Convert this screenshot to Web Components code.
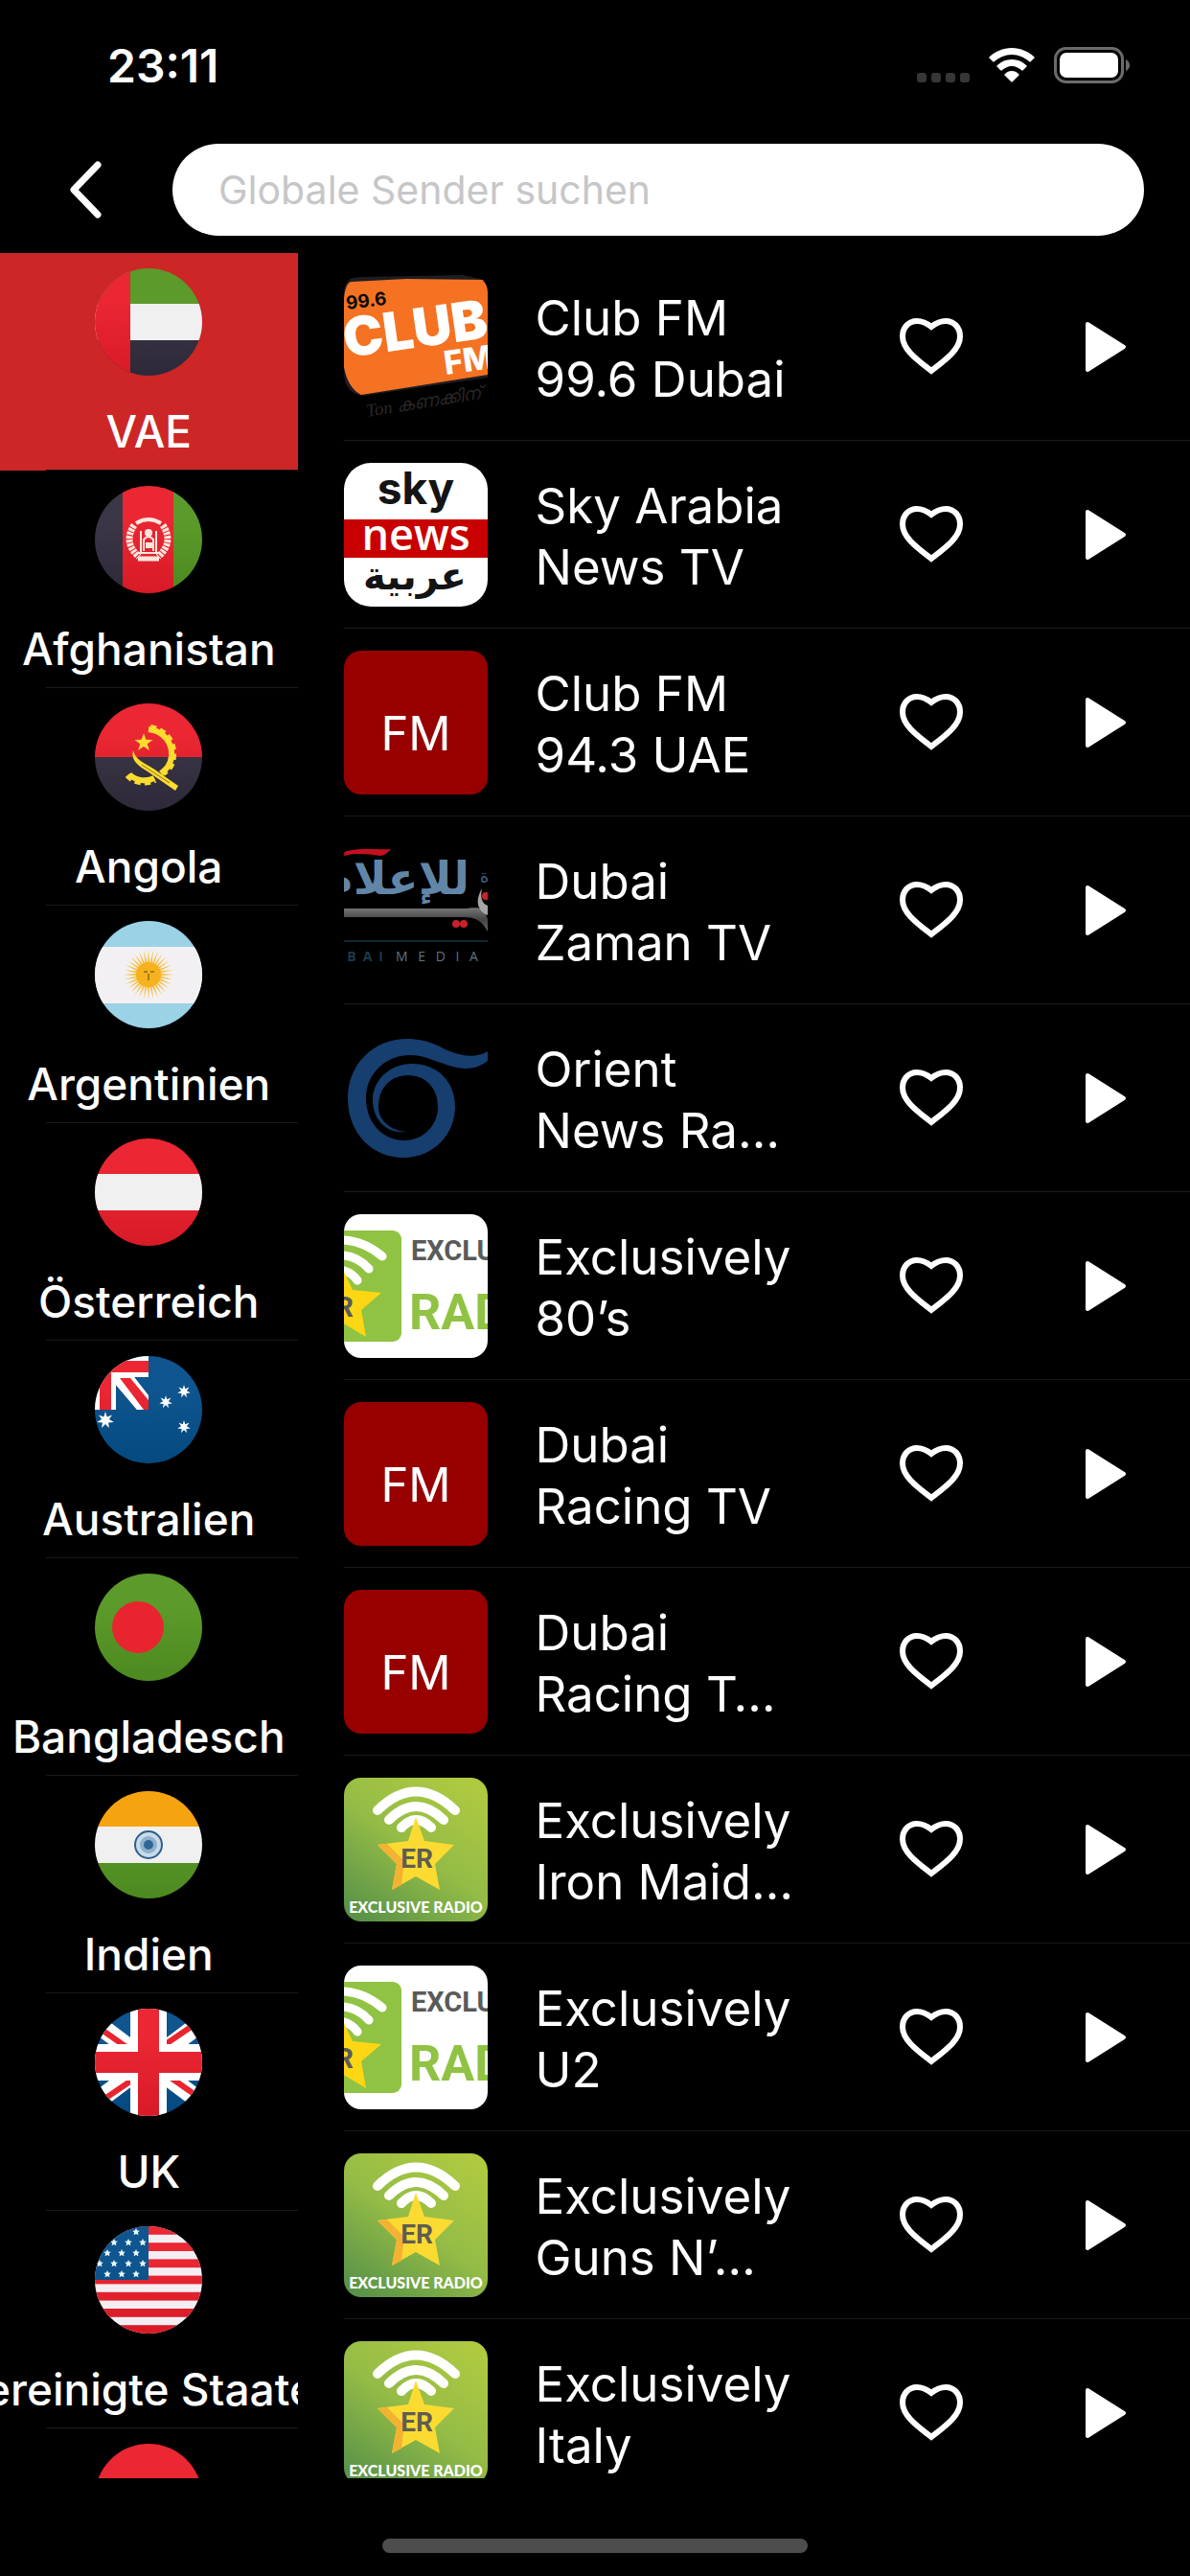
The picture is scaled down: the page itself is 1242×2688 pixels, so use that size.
<!DOCTYPE html>
<html lang="de">
<head>
<meta charset="utf-8">
<meta name="viewport" content="width=device-width, initial-scale=1">
<title>Globale Sender</title>
<style>
html, body {
  height: 100%;
  margin: 0;
  background: #000;
}

body {
  color: #fff;
  font-family: Inter, "Liberation Sans", sans-serif;
}
</style>
</head>
<body>

<radio-page>
  <status-bar slot="top">23:11</status-bar>
  <search-header slot="top" placeholder="Globale Sender suchen"></search-header>

  <country-item slot="countries" flag="ae" selected>VAE</country-item>
  <country-item slot="countries" flag="af">Afghanistan</country-item>
  <country-item slot="countries" flag="ao">Angola</country-item>
  <country-item slot="countries" flag="ar">Argentinien</country-item>
  <country-item slot="countries" flag="at">Österreich</country-item>
  <country-item slot="countries" flag="au">Australien</country-item>
  <country-item slot="countries" flag="bd">Bangladesch</country-item>
  <country-item slot="countries" flag="in">Indien</country-item>
  <country-item slot="countries" flag="gb">UK</country-item>
  <country-item slot="countries" flag="us">Vereinigte Staaten</country-item>
  <country-item slot="countries" flag="red"></country-item>

  <station-row art="club">Club FM 99.6 Dubai</station-row>
  <station-row art="sky">Sky Arabia News TV</station-row>
  <station-row art="fm">Club FM 94.3 UAE</station-row>
  <station-row art="dmi">Dubai Zaman TV</station-row>
  <station-row art="orient">Orient News Ra…</station-row>
  <station-row art="wide">Exclusively 80’s</station-row>
  <station-row art="fm">Dubai Racing TV</station-row>
  <station-row art="fm">Dubai Racing T…</station-row>
  <station-row art="er">Exclusively Iron Maid…</station-row>
  <station-row art="wide">Exclusively U2</station-row>
  <station-row art="er">Exclusively Guns N’…</station-row>
  <station-row art="er">Exclusively Italy</station-row>
</radio-page>

<script>
// flags, all on a 112 x 112 box, the round crop comes from the css

const RED = 'url(#red)';
const GREEN = 'url(#green)';
const BLUE = 'url(#blue)';
const DARK = 'url(#dark)';
const WHITE = '#f0f0f0';

const gradients = `
<defs>
  <linearGradient id="red" x1="0" y1="0" x2="0" y2="112" gradientUnits="userSpaceOnUse"><stop offset="0.3" stop-color="#ea2733"/><stop offset="1" stop-color="#d81a27"/></linearGradient>
  <linearGradient id="green" x1="0" y1="0" x2="0" y2="112" gradientUnits="userSpaceOnUse"><stop offset="0.3" stop-color="#5c9a2b"/><stop offset="1" stop-color="#4c8a20"/></linearGradient>
  <linearGradient id="blue" x1="0" y1="0" x2="0" y2="112" gradientUnits="userSpaceOnUse"><stop offset="0.3" stop-color="#0f558f"/><stop offset="1" stop-color="#044a80"/></linearGradient>
  <linearGradient id="dark" x1="0" y1="0" x2="0" y2="112" gradientUnits="userSpaceOnUse"><stop offset="0.3" stop-color="#3b3747"/><stop offset="1" stop-color="#2d2938"/></linearGradient>
</defs>`;

// star with any number of points
function star(cx, cy, points, outer, inner, fill) {
  const list = [];
  for (let i = 0; i < points * 2; i++) {
    const r = i % 2 ? inner : outer;
    const a = Math.PI * i / points - Math.PI / 2;
    list.push((cx + r * Math.cos(a)).toFixed(1) + ',' + (cy + r * Math.sin(a)).toFixed(1));
  }
  return `<polygon points="${list.join(' ')}" fill="${fill}"/>`;
}

function usStars() {
  const rows = [[6, [43]], [17, [20, 35, 50]], [28, [13, 28, 43]], [39, [5, 20, 35, 50]], [50, [13, 28, 43]]];
  return rows.map(([y, xs]) => xs.map(x => star(x, y, 5, 4, 2, '#e8f6ff')).join('')).join('');
}

function usStripes() {
  let out = '';
  for (let i = 0; i < 13; i += 2) {
    out += `<rect y="${i * 8.6}" width="112" height="8.8" fill="${RED}"/>`;
  }
  return out;
}

const flags = {
  ae: `<rect width="112" height="38" fill="${GREEN}"/><rect y="37" width="112" height="38" fill="${WHITE}"/><rect y="75" width="112" height="37" fill="${DARK}"/><rect width="37" height="112" fill="${RED}"/>`,

  af: `<rect width="30" height="112" fill="${DARK}"/><rect x="29" width="54" height="112" fill="${RED}"/><rect x="82" width="30" height="112" fill="${GREEN}"/>
    <g fill="none" stroke="#ffe6dc">
      <path d="M43 39 Q56 31 69 39" stroke-width="4"/>
      <path d="M41 41 Q29 59 46 74 M71 41 Q83 59 66 74" stroke-width="7" stroke-dasharray="3 1"/>
      <path d="M45 76 H67" stroke-width="5"/>
      <path d="M48 69 V47 M64 69 V47 M46 70 H66" stroke-width="2"/>
      <path d="M51 68 V56 Q56 50 61 56 V68" stroke-width="2"/>
    </g>
    <circle cx="56" cy="49" r="4" fill="#ffe6dc"/><rect x="53" y="59" width="7" height="6" fill="#ffe6dc"/>`,

  ao: `<rect width="112" height="56" fill="${RED}"/><rect y="56" width="112" height="56" fill="${DARK}"/>
    <path d="M56 27 C73 29 81 42 80 55 C79 65 74 69 69 73" fill="none" stroke="#fddb30" stroke-width="6"/>
    <path d="M58 25 C76 28 83 42 82 55 C81 66 76 70 71 73" fill="none" stroke="#fddb30" stroke-width="6" stroke-dasharray="6 4"/>
    <path d="M36 74 C43 81 54 82 62 78" fill="none" stroke="#fddb30" stroke-width="6"/>
    <path d="M34 75 C42 84 54 84 63 80" fill="none" stroke="#fddb30" stroke-width="6" stroke-dasharray="6 4"/>
    <path d="M40 49 C42 58 51 62 61 68 L87 86 L84 91 L55 71 C45 65 37 59 40 49 Z" fill="#fddb30"/>
    <path d="M49 64 L78 83" stroke="#8a7428" stroke-width="1"/>
    ${star(51, 41, 5, 10, 4, '#fddb30')}`,

  ar: `<rect width="112" height="112" fill="#9bd2e6"/><rect y="27" width="112" height="59" fill="#f2f0f2"/>
    ${star(56, 56, 32, 26, 12, '#f6c04a')}<circle cx="56" cy="56" r="13" fill="#f5b21d"/>
    <path d="M51 53 h4 M58 53 h4 M56 55 v7" stroke="#a87a1a" stroke-width="2"/>`,

  at: `<rect width="112" height="112" fill="${RED}"/><rect y="37" width="112" height="38" fill="${WHITE}"/>`,

  au: `<rect width="112" height="112" fill="${BLUE}"/><rect width="56" height="56" fill="#fff"/>
    <path d="M22 30 L44 56 H22 Z" fill="${BLUE}"/>
    <path d="M41 22 H56 V42 Z" fill="${BLUE}"/>
    <path d="M22 22 H41 L56 41 V56 H44 L22 30 Z" fill="#fff"/>
    <path d="M26 23 H37 L56 46 V56 H51 Z" fill="${RED}"/>
    <rect y="5" width="56" height="12" fill="${RED}"/><rect x="5" y="5" width="12" height="51" fill="${RED}"/>
    ${star(11, 67, 7, 9, 4, '#fff')}${star(74, 48, 7, 7, 3, '#fff')}${star(93, 37, 7, 7, 3, '#fff')}${star(93, 74, 7, 7, 3, '#fff')}`,

  bd: `<rect width="112" height="112" fill="${GREEN}"/><circle cx="45" cy="56" r="27" fill="#e8252f"/>`,

  in: `<rect width="112" height="38" fill="#f6a310"/><rect y="37" width="112" height="38" fill="${WHITE}"/><rect y="75" width="112" height="37" fill="${GREEN}"/>
    <circle cx="56" cy="56" r="14" fill="#c9dbe8" stroke="#2a5f8c" stroke-width="2"/><circle cx="56" cy="56" r="9" fill="#8fb1cc"/><circle cx="56" cy="56" r="5" fill="#2f6797"/>`,

  gb: `<rect width="112" height="112" fill="${BLUE}"/>
    <path d="M-8 8 L120 104 M120 8 L-8 104" stroke="#fff" stroke-width="19"/>
    <path d="M0 17 L40 45 M112 11 L68 41 M0 101 L44 71 M112 95 L72 67" stroke="#e8252f" stroke-width="6"/>
    <path d="M56 0 V112 M0 56 H112" stroke="#fff" stroke-width="38"/>
    <rect x="45" width="22" height="112" fill="${RED}"/><rect y="45" width="112" height="22" fill="${RED}"/>`,

  us: `<rect width="112" height="112" fill="#f4eef2"/>${usStripes()}<rect width="56" height="56" fill="${BLUE}"/>${usStars()}`,

  red: `<rect width="112" height="112" fill="${RED}"/>`
};

// station logos on a 150 x 150 box
const art = {
  club: `
    <path d="M0 8 Q4 2 20 2 L124 0 L150 6 V107 L20 126 Q0 124 0 100 Z" fill="#1d1d24"/>
    <path d="M0 24 Q2 7 8 7 L65 4 L150 5 V104 L18 125 Q4 118 0 96 Z" fill="#f57222"/>
    <g font-family="Inter, sans-serif">
      <text transform="translate(3 36) rotate(-7)" font-size="19" font-weight="700" fill="#0a0a0a">99.6</text>
      <text transform="translate(2 86) rotate(-8)" font-size="56" font-weight="900" fill="#fff">CLUB</text>
      <text transform="translate(106 104) rotate(-8)" font-size="34" font-weight="800" fill="#fff">FM</text>
    </g>
    <text transform="translate(24 148) rotate(-9)" font-size="19" font-style="italic" font-family="'Liberation Serif', serif" fill="#2a2627">Ton കണക്കിന് fun</text>`,

  sky: `
    <rect width="150" height="150" rx="28" fill="#fff"/>
    <rect y="59" width="150" height="40" fill="#c90000"/>
    <text x="75" y="43" text-anchor="middle" font-family="Inter, sans-serif" font-size="46" font-weight="700" fill="#141414">sky</text>
    <text x="75" y="91" text-anchor="middle" font-family="'Open Sans', sans-serif" font-size="45" font-weight="600" fill="#fff">news</text>
    <text x="74" y="132" text-anchor="middle" font-family="'DejaVu Sans', sans-serif" font-size="40" font-weight="700" fill="#141414">عربية</text>`,

  fm: `
    <rect width="150" height="150" fill="#980000"/>
    <text x="75" y="104" text-anchor="middle" font-family="Inter, sans-serif" font-size="49" fill="#fff">FM</text>`,

  dmi: `
    <defs><linearGradient id="steel" x1="0" y1="0" x2="0" y2="1"><stop offset="0" stop-color="#777"/><stop offset="0.5" stop-color="#444"/><stop offset="1" stop-color="#666"/></linearGradient></defs>
    <path d="M0 14 C16 9 32 12 49 11 Q43 18 38 18 C24 16 12 15 0 18 Z" fill="#c4101f"/>
    <text x="131" y="58" direction="rtl" font-family="'DejaVu Sans', sans-serif" font-size="47" font-weight="700" fill="#6286a8">للإعلام</text>
    <path d="M0 73 H124 C138 73 144 68 150 84 V97 C144 86 138 82 124 82 H0 Z" fill="url(#steel)"/>
    <path d="M144 52 C136 66 140 76 150 80 V70 C144 68 142 62 144 52 Z" fill="#a5a5a5"/>
    <circle cx="117" cy="89" r="4" fill="#c8202c"/><circle cx="125" cy="89" r="4" fill="#c8202c"/><circle cx="148" cy="60" r="4" fill="#c8202c"/>
    <text x="142" y="46" font-family="'DejaVu Sans', sans-serif" font-size="18" fill="#3e6480">ة</text>
    <path d="M0 107 H150" stroke="#0d2733" stroke-width="2"/>
    <text x="41" y="128" text-anchor="end" font-family="'Open Sans', sans-serif" font-size="14" font-weight="700" fill="#1b3a4b">B&#8194;A&#8194;I</text>
    <text x="54" y="128" font-family="'Open Sans', sans-serif" font-size="14" fill="#5b7684">M&#8194; E&#8194; D&#8194; I&#8194; A</text>`,

  orient: `
    <path fill="#163e6e" d="M150 26 C134 36 112 28 100 21 C88 15 76 13 66 13 C30 13 4 40 4 75 C4 112 30 137 62 137 C94 137 116 112 116 84 C116 57 97 39 71 39 C48 39 30 56 30 77 C30 97 44 112 64 110 C48 108 36 98 36 84 C36 65 48 51 67 51 C86 51 98 65 98 84 C98 104 82 119 63 119 C40 119 23 100 23 75 C23 48 45 30 69 30 C82 30 92 35 104 39 C120 45 136 47 150 36 Z"/>`,

  wide: `
    <rect width="150" height="150" fill="#fff"/>
    <rect x="-40" y="17" width="100" height="116" rx="9" fill="#90c343"/>
    <g fill="none" stroke="#fff" stroke-width="9" stroke-linecap="round">
      <path d="M-10 27 Q18 25 40 44"/><path d="M-10 43 Q12 41 26 57"/><path d="M-8 58 Q6 58 14 69"/>
    </g>
    <path d="M0 60 L9 79 L39 82 L18 100 L23 128 L-2 113 V58 Z" fill="#fdd714"/>
    <g font-family="Roboto, sans-serif" font-weight="700">
      <text x="10" y="107" text-anchor="end" font-size="30" fill="#595a5a">ER</text>
      <text x="70" y="48" font-size="29" fill="#595a5a">EXCLUSIVE</text>
      <text x="68" y="120" font-size="52" fill="#90c343">RADIO</text>
    </g>`,

  er: `
    <defs><linearGradient id="lime" x1="0.85" y1="0" x2="0.15" y2="1"><stop offset="0" stop-color="#b0ca40"/><stop offset="0.5" stop-color="#94bc46"/><stop offset="1" stop-color="#5a9348"/></linearGradient></defs>
    <rect width="150" height="150" fill="url(#lime)"/>
    <g fill="none" stroke="#fff" stroke-width="10" stroke-linecap="round">
      <path d="M35 34 Q75 -5 116 34"/><path d="M47 44 Q75 16 104 44"/><path d="M60 52 Q75 36 91 52"/>
    </g>
    <path d="M75 41 L84 66 L115 70 L95 90 L100 117 L75 103 L50 117 L55 90 L35 70 L67 66 Z" fill="#fbdb32"/>
    <path d="M35 70 L45 69 L63 87 L60 112 L50 117 L55 90 Z" fill="#f4b233"/>
    <text x="76" y="94" text-anchor="middle" font-family="Roboto, sans-serif" font-weight="700" font-size="28" fill="#5f5d52">ER</text>
    <text x="75" y="141" text-anchor="middle" font-family="Lato, sans-serif" font-weight="900" font-size="16" fill="#fff">EXCLUSIVE RADIO</text>`
};


class RadioPage extends HTMLElement {
  constructor() {
    super();
    this.attachShadow({mode: 'open'});
    this.shadowRoot.innerHTML = `
<style>
:host {
  display: flex;
  flex-direction: column;
  height: 100vh;
  overflow: hidden;
}

main {
  display: flex;
  flex: 1;
  min-height: 0;
}

nav {
  flex: none;
  overflow: hidden;
  width: 25%;
}

section {
  flex: 1;
  min-width: 0;
  overflow: hidden;
  padding-left: 48px;
}

footer {
  display: flex;
  flex: none;
  height: 102px;
  justify-content: center;
}

.home-bar {
  background: #4d4d4d;
  border-radius: 8px;
  height: 15px;
  margin-top: 63px;
  width: 444px;
}
</style>
<slot name="top"></slot>
<main>
  <nav aria-label="Länder"><slot name="countries"></slot></nav>
  <section aria-label="Sender"><slot></slot></section>
</main>
<footer><div class="home-bar"></div></footer>`;
  }
}

class StatusBar extends HTMLElement {
  constructor() {
    super();
    this.attachShadow({mode: 'open'});
    this.shadowRoot.innerHTML = `
<style>
:host {
  align-items: center;
  display: flex;
  flex: none;
  font-size: 48px;
  font-weight: 600;
  height: 136px;
  justify-content: space-between;
  padding: 0 62px 0 112px;
}

svg {
  display: block;
}

.icons {
  display: flex;
  gap: 20px;
}
</style>
<time><slot></slot></time>
<div class="icons">
  <svg width="55" height="38" viewBox="0 0 55 38" fill="#363636">
    <rect y="27" width="10" height="10" rx="3"/><rect x="15" y="27" width="10" height="10" rx="3"/><rect x="30" y="27" width="10" height="10" rx="3"/><rect x="45" y="27" width="10" height="10" rx="3"/>
  </svg>
  <svg width="48" height="38" viewBox="0 0 48 38" fill="#fff">
    <path d="M24 1 C15 1 6 5 1 10 C0 11 0 12 1 12 L4 15 C5 16 5 16 6 15 C11 11 17 8 24 8 C31 8 37 11 42 15 C43 16 43 16 44 15 L47 12 C48 12 48 11 47 10 C42 5 33 1 24 1 Z"/>
    <path d="M24 13 C18 13 13 15 9 19 C8 20 8 20 9 21 L12 24 C13 25 14 25 14 24 C17 22 20 20 24 20 C28 20 31 22 34 24 C34 25 35 25 36 24 L39 21 C40 20 40 20 39 19 C35 15 30 13 24 13 Z"/>
    <path d="M24 25 C21 25 19 26 17 28 C16 29 16 29 17 30 L23 36 Q24 37 25 36 L31 30 C32 29 32 29 31 28 C29 26 27 25 24 25 Z"/>
  </svg>
  <svg width="80" height="38" viewBox="0 0 80 38">
    <rect x="1.5" y="1.5" width="70" height="35" rx="11" fill="none" stroke="#6b6b6b" stroke-width="3"/>
    <rect x="6" y="6" width="61" height="26" rx="7" fill="#fff"/>
    <path d="M75 13 Q79 15 79 19 Q79 23 75 25 Z" fill="#6b6b6b"/>
  </svg>
</div>`;
  }
}

class SearchHeader extends HTMLElement {
  constructor() {
    super();
    this.attachShadow({mode: 'open'});
    this.shadowRoot.innerHTML = `
<style>
:host {
  display: flex;
  flex: none;
  padding: 14px 48px 18px 0;
}

button {
  align-items: center;
  background: none;
  border: none;
  display: flex;
  height: 96px;
  justify-content: center;
  padding: 0;
  width: 180px;
}

input {
  background: #fff;
  border: none;
  border-radius: 48px;
  box-sizing: border-box;
  color: #000;
  flex: 1;
  font-family: inherit;
  font-size: 41px;
  height: 96px;
  min-width: 0;
  outline: none;
  padding: 0 48px;
}

input::placeholder {
  color: #c6c6c8;
  opacity: 1;
}
</style>
<button aria-label="Zurück">
  <svg width="34" height="62" viewBox="0 0 34 62" fill="none" stroke="#fff" stroke-width="7" stroke-linecap="round" stroke-linejoin="round"><path d="M29 5 L4 31 L29 57"/></svg>
</button>
<input type="text">`;
  }

  connectedCallback() {
    const input = this.shadowRoot.querySelector('input');
    input.placeholder = this.getAttribute('placeholder');
    input.setAttribute('aria-label', input.placeholder);
  }
}

class CountryItem extends HTMLElement {
  constructor() {
    super();
    this.attachShadow({mode: 'open'});
    this.shadowRoot.innerHTML = `
<style>
:host {
  display: block;
}

:host([selected]) {
  background: #cc2627;
}

button {
  align-items: center;
  background: none;
  border: none;
  color: inherit;
  display: flex;
  flex-direction: column;
  font-family: inherit;
  font-size: 46px;
  font-weight: 500;
  gap: 28px;
  height: 226px;
  line-height: 60px;
  overflow: hidden;
  padding: 16px 0 0;
  white-space: nowrap;
  width: 100%;
}

svg {
  border-radius: 50%;
  flex: none;
  height: 112px;
  width: 112px;
}

.line {
  background: #1a1a1a;
  height: 1px;
  margin-left: 48px;
}
</style>
<button>
  <svg viewBox="0 0 112 112" aria-hidden="true"></svg>
  <span><slot></slot></span>
</button>
<div class="line"></div>`;
  }

  connectedCallback() {
    this.shadowRoot.querySelector('svg').innerHTML = gradients + flags[this.getAttribute('flag')];
  }
}

class StationRow extends HTMLElement {
  constructor() {
    super();
    this.attachShadow({mode: 'open'});
    this.shadowRoot.innerHTML = `
<style>
:host {
  border-bottom: 1px solid #1a1a1a;
  display: flex;
  align-items: center;
  height: 195px;
  padding-right: 48px;
}

.art {
  border-radius: 18px;
  flex: none;
  height: 150px;
  overflow: hidden;
  width: 150px;
}

.name {
  flex: 1;
  font-size: 51px;
  line-height: 64px;
  margin: 0 96px 0 50px;
  min-width: 0;
  padding-top: 4px;
}

button {
  align-items: center;
  background: none;
  border: none;
  display: flex;
  flex: none;
  height: 80px;
  justify-content: center;
  padding: 0;
  width: 80px;
}

.play {
  margin-left: 102px;
}
</style>
<svg class="art" viewBox="0 0 150 150" aria-hidden="true"></svg>
<div class="name"><slot></slot></div>
<button aria-label="Favorit">
  <svg width="68" height="60" viewBox="0 0 68 60" fill="none" stroke="#fff" stroke-width="6"><path d="M34 9 C29 5 24 3 19 3 C10 3 4 10 4 19 C4 33 20 44 34 55 C48 44 64 33 64 19 C64 10 58 3 49 3 C44 3 39 5 34 9 Z"/></svg>
</button>
<button class="play" aria-label="Abspielen">
  <svg width="44" height="54" viewBox="0 0 44 54" fill="#fff" stroke="#fff" stroke-width="4" stroke-linejoin="round"><path d="M3 3 L41 27 L3 51 Z"/></svg>
</button>`;
  }

  connectedCallback() {
    this.shadowRoot.querySelector('.art').innerHTML = art[this.getAttribute('art')];
  }
}

customElements.define('radio-page', RadioPage);
customElements.define('status-bar', StatusBar);
customElements.define('search-header', SearchHeader);
customElements.define('country-item', CountryItem);
customElements.define('station-row', StationRow);
</script>
</body>
</html>
